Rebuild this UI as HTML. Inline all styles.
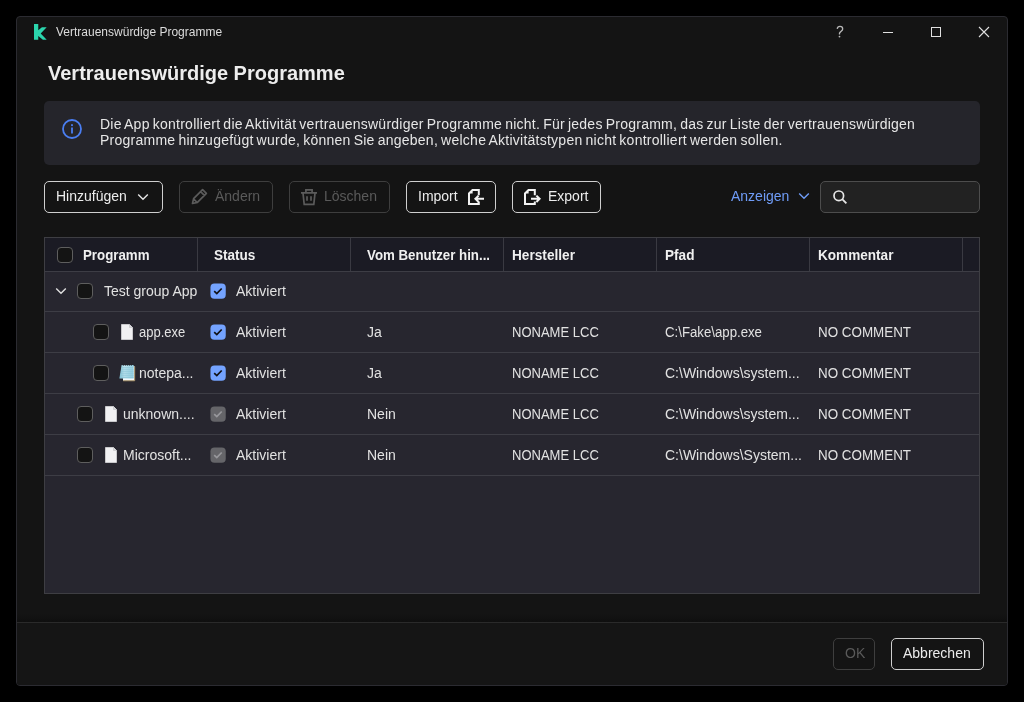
<!DOCTYPE html>
<html><head><meta charset="utf-8"><style>
*{box-sizing:border-box;margin:0;padding:0}
html,body{width:1024px;height:702px;background:#000;overflow:hidden}
body{font-family:"Liberation Sans",sans-serif;color:#e8e8e8}
#root{position:absolute;left:0;top:0;width:1024px;height:702px;will-change:transform}
.a{position:absolute;white-space:nowrap}
.box{position:absolute;border-radius:5px}
.t{position:absolute;white-space:nowrap;font-size:14px;line-height:16px}
.h{position:absolute;white-space:nowrap;font-size:14px;transform-origin:0 0;font-weight:bold;line-height:16px;color:#f0f0f0}
.c{position:absolute;white-space:nowrap;font-size:14px;line-height:16px;color:#e2e2e2}
.cb{position:absolute;width:16px;height:16px;border:1px solid #5e5e5e;border-radius:4px;background:#141414}
.hl{position:absolute;left:45px;width:934px;height:1px;background:#3d3d45}
.vl{position:absolute;top:238px;width:1px;height:33px;background:#3a3a42}
</style></head><body><div id="root">
<div class="a" style="left:16px;top:16px;width:992px;height:670px;background:#141414;border:1px solid #2b2b31;border-radius:4px"></div>
<svg class="a" style="left:34px;top:24px" width="14" height="17" viewBox="0 0 14 17"><path d="M0 0.1H4.26V6.2L7.9 3.35H12.7L6.7 9.5L12.7 15.8H8.9L4.26 11.9V15.8H0Z" fill="#2bd5ad"/></svg>
<div class="a" style="left:56px;top:25px;font-size:12px;line-height:14px;color:#dcdcdc">Vertrauenswürdige Programme</div>
<svg class="a" style="left:834px;top:24px" width="12" height="16" viewBox="0 0 12 16"><path d="M3.2 4.9C3.4 3.2 4.6 2.3 6 2.3C7.6 2.3 8.7 3.4 8.7 4.9C8.7 6.7 6.6 7.3 5.5 9.2V10.4" fill="none" stroke="#b8b8b8" stroke-width="1.3"/><circle cx="5.5" cy="12.6" r="0.9" fill="#b8b8b8"/></svg>
<div class="a" style="left:883px;top:32px;width:10px;height:1px;background:#e0e0e0"></div>
<div class="a" style="left:931px;top:27px;width:10px;height:10px;border:1px solid #e0e0e0"></div>
<svg class="a" style="left:978px;top:26px" width="12" height="12" viewBox="0 0 12 12"><path d="M1 1L11 11M11 1L1 11" stroke="#e0e0e0" stroke-width="1.1"/></svg>
<div class="a" style="left:48px;top:62px;font-size:20px;line-height:22px;font-weight:bold;color:#ededed">Vertrauenswürdige Programme</div>
<div class="a" style="left:44px;top:101px;width:936px;height:64px;background:#25252b;border-radius:5px"></div>
<svg class="a" style="left:62px;top:119px" width="20" height="20" viewBox="0 0 20 20"><circle cx="10" cy="10" r="9" fill="none" stroke="#4a7ef2" stroke-width="1.8"/><rect x="9.1" y="8.5" width="1.8" height="6" fill="#4a7ef2"/><rect x="9.1" y="5.2" width="1.8" height="1.9" fill="#4a7ef2"/></svg>
<div class="t" style="left:100px;top:116px;color:#e6e6e6;letter-spacing:0.25px;word-spacing:-1.1px">Die App kontrolliert die Aktivität vertrauenswürdiger Programme nicht. Für jedes Programm, das zur Liste der vertrauenswürdigen<br>Programme hinzugefügt wurde, können Sie angeben, welche Aktivitätstypen nicht kontrolliert werden sollen.</div>
<div class="box" style="left:44px;top:181px;width:119px;height:32px;border:1px solid #cfcfcf;background:#141414"></div>
<div class="t" style="left:56px;top:188px;color:#ececec;">Hinzufügen</div>
<svg class="a" style="left:137px;top:193px" width="12" height="8" viewBox="0 0 12 8"><path d="M1.2 1.5L6 6.2 10.8 1.5" fill="none" stroke="#e6e6e6" stroke-width="1.4"/></svg>
<div class="box" style="left:179px;top:181px;width:94px;height:32px;border:1px solid #3e3e3e;background:#141414"></div>
<svg class="a" style="left:190px;top:188px" width="18" height="18" viewBox="0 0 18 18"><path d="M12.6 1.6l3.8 3.8-9 9-4.9 1.1 1.1-4.9z M10.6 3.6l3.8 3.8 M4 11.3l2.7 2.7" fill="none" stroke="#5b5b5b" stroke-width="1.7" stroke-linejoin="round"/></svg>
<div class="t" style="left:215px;top:188px;color:#5a5a5a;">Ändern</div>
<div class="box" style="left:289px;top:181px;width:101px;height:32px;border:1px solid #3e3e3e;background:#141414"></div>
<svg class="a" style="left:300px;top:188px" width="18" height="18" viewBox="0 0 18 18"><path d="M1 4.9h16 M5.9 4.7V1.9h6.2v2.8 M3 5.2l1.2 11.2h9.6l1.2-11.2 M7 8.2v4.5 M11 8.2v4.5" fill="none" stroke="#5b5b5b" stroke-width="1.7"/></svg>
<div class="t" style="left:324px;top:188px;color:#5a5a5a;">Löschen</div>
<div class="box" style="left:406px;top:181px;width:90px;height:32px;border:1px solid #cfcfcf;background:#141414"></div>
<div class="t" style="left:418px;top:188px;color:#ececec;">Import</div>
<svg class="a" style="left:466px;top:187px" width="20" height="20" viewBox="0 0 20 20"><path d="M12.8 8.2V2.9H6.5L3 6.4V17h9.8v-2.5" fill="none" stroke="#f2f2f2" stroke-width="2"/><path d="M3 6.6L6.6 2.9V6.6z" fill="#f2f2f2"/><path d="M18 11.8h-8 M12.6 8.6l-3.2 3.2 3.2 3.2" fill="none" stroke="#f2f2f2" stroke-width="2"/></svg>
<div class="box" style="left:512px;top:181px;width:89px;height:32px;border:1px solid #cfcfcf;background:#141414"></div>
<svg class="a" style="left:522px;top:187px" width="20" height="20" viewBox="0 0 20 20"><path d="M12.8 8.2V2.9H6.5L3 6.4V17h9.8v-2.5" fill="none" stroke="#f2f2f2" stroke-width="2"/><path d="M3 6.6L6.6 2.9V6.6z" fill="#f2f2f2"/><path d="M9 11.8h8 M14.4 8.6l3.2 3.2-3.2 3.2" fill="none" stroke="#f2f2f2" stroke-width="2"/></svg>
<div class="t" style="left:548px;top:188px;color:#ececec;">Export</div>
<div class="t" style="left:731px;top:188px;color:#6f9cf7;">Anzeigen</div>
<svg class="a" style="left:798px;top:192px" width="12" height="8" viewBox="0 0 12 8"><path d="M1.2 1.5L6 6.2 10.8 1.5" fill="none" stroke="#6f9cf7" stroke-width="1.4"/></svg>
<div class="box" style="left:820px;top:181px;width:160px;height:32px;background:#222222;border:1px solid #4d4d4d"></div>
<svg class="a" style="left:832px;top:189px" width="16" height="16" viewBox="0 0 16 16"><circle cx="6.8" cy="6.8" r="4.8" fill="none" stroke="#e6e6e6" stroke-width="1.7"/><path d="M10.2 10.2l4.2 4.2" stroke="#e6e6e6" stroke-width="1.8"/></svg>
<div class="a" style="left:44px;top:237px;width:936px;height:357px;background:#27262f;border:1px solid #3e3e43"></div>
<div class="a" style="left:45px;top:238px;width:934px;height:33px;background:#1b1b24"></div>
<div class="hl" style="top:271px"></div>
<div class="hl" style="top:311px"></div>
<div class="hl" style="top:352px"></div>
<div class="hl" style="top:393px"></div>
<div class="hl" style="top:434px"></div>
<div class="hl" style="top:475px"></div>
<div class="vl" style="left:197px"></div>
<div class="vl" style="left:350px"></div>
<div class="vl" style="left:503px"></div>
<div class="vl" style="left:656px"></div>
<div class="vl" style="left:809px"></div>
<div class="vl" style="left:962px"></div>
<div class="cb" style="left:57px;top:247px"></div>
<div class="h" style="left:83px;top:247px;transform:scaleX(0.95)">Programm</div>
<div class="h" style="left:214px;top:247px;transform:scaleX(0.967)">Status</div>
<div class="h" style="left:367px;top:247px;transform:scaleX(0.949)">Vom Benutzer hin...</div>
<div class="h" style="left:512px;top:247px;transform:scaleX(0.975)">Hersteller</div>
<div class="h" style="left:665px;top:247px;transform:scaleX(0.97)">Pfad</div>
<div class="h" style="left:818px;top:247px;transform:scaleX(0.97)">Kommentar</div>
<svg class="a" style="left:55px;top:287px" width="12" height="8" viewBox="0 0 12 8"><path d="M1.2 1.5L6 6.2 10.8 1.5" fill="none" stroke="#e0e0e0" stroke-width="1.4"/></svg>
<div class="cb" style="left:77px;top:283px"></div>
<div class="c" style="left:104px;top:283px">Test group App</div>
<svg class="a" style="left:210px;top:283px" width="16" height="16" viewBox="0 0 16 16"><rect x="0.45" y="0.4" width="15.3" height="15.3" rx="4" fill="#74a3ff"/><path d="M4.2 8.1L6.8 10.5L11.7 5.5" fill="none" stroke="#111114" stroke-width="1.7"/></svg>
<div class="c" style="left:236px;top:283px">Aktiviert</div>
<div class="cb" style="left:93px;top:324px"></div>
<svg class="a" style="left:121px;top:324px" width="12" height="16" viewBox="0 0 12 16"><path d="M0.5 0.5h8l3 3v12h-11z" fill="#f1f1f3" stroke="#c9c9cc" stroke-width="1"/><path d="M8.5 0.5v3h3" fill="#d8d8dc" stroke="#c9c9cc" stroke-width="0.8"/></svg>
<div class="c" style="left:139px;top:324px;transform:scaleX(0.93);transform-origin:0 0">app.exe</div>
<svg class="a" style="left:210px;top:324px" width="16" height="16" viewBox="0 0 16 16"><rect x="0.45" y="0.4" width="15.3" height="15.3" rx="4" fill="#74a3ff"/><path d="M4.2 8.1L6.8 10.5L11.7 5.5" fill="none" stroke="#111114" stroke-width="1.7"/></svg>
<div class="c" style="left:236px;top:324px">Aktiviert</div>
<div class="c" style="left:367px;top:324px">Ja</div>
<div class="c" style="left:512px;top:324px;transform:scaleX(0.93);transform-origin:0 0">NONAME LCC</div>
<div class="c" style="left:665px;top:324px;transform:scaleX(0.944);transform-origin:0 0">C:\Fake\app.exe</div>
<div class="c" style="left:818px;top:324px;transform:scaleX(0.957);transform-origin:0 0">NO COMMENT</div>
<div class="cb" style="left:93px;top:365px"></div>
<svg class="a" style="left:119px;top:364px" width="18" height="18" viewBox="0 0 18 18"><path d="M4 2.2H15.7V16.8H4z" fill="#f4f8fa"/><path d="M15.7 2.6V16.8H4.2" fill="none" stroke="#a48a5a" stroke-width="0.9"/><defs><linearGradient id="ng" x1="0" y1="0" x2="1" y2="0"><stop offset="0" stop-color="#7fc0d3"/><stop offset="0.35" stop-color="#bfe5f0"/><stop offset="1" stop-color="#93d0e2"/></linearGradient></defs><path d="M2.6 1H14.6V14.6H0.4z" fill="url(#ng)"/><path d="M2.5 3.8h12M2.2 5.8h12.4M1.9 7.8h12.7M1.6 9.8h13M1.2 11.8h13.4M0.9 13.6h13.7" stroke="#86c2d4" stroke-width="0.8"/><path d="M4.3 0.2v1.6M6.3 0.2v1.6M8.3 0.2v1.6M10.3 0.2v1.6M12.3 0.2v1.6" stroke="#23222a" stroke-width="0.9"/></svg>
<div class="c" style="left:139px;top:365px">notepa...</div>
<svg class="a" style="left:210px;top:365px" width="16" height="16" viewBox="0 0 16 16"><rect x="0.45" y="0.4" width="15.3" height="15.3" rx="4" fill="#74a3ff"/><path d="M4.2 8.1L6.8 10.5L11.7 5.5" fill="none" stroke="#111114" stroke-width="1.7"/></svg>
<div class="c" style="left:236px;top:365px">Aktiviert</div>
<div class="c" style="left:367px;top:365px">Ja</div>
<div class="c" style="left:512px;top:365px;transform:scaleX(0.93);transform-origin:0 0">NONAME LCC</div>
<div class="c" style="left:665px;top:365px">C:\Windows\system...</div>
<div class="c" style="left:818px;top:365px;transform:scaleX(0.957);transform-origin:0 0">NO COMMENT</div>
<div class="cb" style="left:77px;top:406px"></div>
<svg class="a" style="left:105px;top:406px" width="12" height="16" viewBox="0 0 12 16"><path d="M0.5 0.5h8l3 3v12h-11z" fill="#f1f1f3" stroke="#c9c9cc" stroke-width="1"/><path d="M8.5 0.5v3h3" fill="#d8d8dc" stroke="#c9c9cc" stroke-width="0.8"/></svg>
<div class="c" style="left:123px;top:406px">unknown....</div>
<svg class="a" style="left:210px;top:406px" width="16" height="16" viewBox="0 0 16 16"><rect x="0.45" y="0.4" width="15.3" height="15.3" rx="4" fill="#656569"/><path d="M4.2 8.1L6.8 10.5L11.7 5.5" fill="none" stroke="#98989c" stroke-width="1.7"/></svg>
<div class="c" style="left:236px;top:406px">Aktiviert</div>
<div class="c" style="left:367px;top:406px">Nein</div>
<div class="c" style="left:512px;top:406px;transform:scaleX(0.93);transform-origin:0 0">NONAME LCC</div>
<div class="c" style="left:665px;top:406px">C:\Windows\system...</div>
<div class="c" style="left:818px;top:406px;transform:scaleX(0.957);transform-origin:0 0">NO COMMENT</div>
<div class="cb" style="left:77px;top:447px"></div>
<svg class="a" style="left:105px;top:447px" width="12" height="16" viewBox="0 0 12 16"><path d="M0.5 0.5h8l3 3v12h-11z" fill="#f1f1f3" stroke="#c9c9cc" stroke-width="1"/><path d="M8.5 0.5v3h3" fill="#d8d8dc" stroke="#c9c9cc" stroke-width="0.8"/></svg>
<div class="c" style="left:123px;top:447px">Microsoft...</div>
<svg class="a" style="left:210px;top:447px" width="16" height="16" viewBox="0 0 16 16"><rect x="0.45" y="0.4" width="15.3" height="15.3" rx="4" fill="#656569"/><path d="M4.2 8.1L6.8 10.5L11.7 5.5" fill="none" stroke="#98989c" stroke-width="1.7"/></svg>
<div class="c" style="left:236px;top:447px">Aktiviert</div>
<div class="c" style="left:367px;top:447px">Nein</div>
<div class="c" style="left:512px;top:447px;transform:scaleX(0.93);transform-origin:0 0">NONAME LCC</div>
<div class="c" style="left:665px;top:447px">C:\Windows\System...</div>
<div class="c" style="left:818px;top:447px;transform:scaleX(0.957);transform-origin:0 0">NO COMMENT</div>
<div class="a" style="left:17px;top:614px;width:990px;height:8px;background:linear-gradient(#141414,#0f0f0f)"></div>
<div class="a" style="left:17px;top:622px;width:990px;height:1px;background:#2a2a2a"></div>
<div class="a" style="left:17px;top:623px;width:990px;height:62px;background:#151515;border-radius:0 0 3px 3px"></div>
<div class="box" style="left:833px;top:638px;width:42px;height:32px;border:1px solid #3e3e3e;background:#141414"></div>
<div class="t" style="left:845px;top:645px;color:#5a5a5a;">OK</div>
<div class="box" style="left:891px;top:638px;width:93px;height:32px;border:1px solid #cfcfcf;background:#141414"></div>
<div class="t" style="left:903px;top:645px;color:#ececec;">Abbrechen</div>
</div></body></html>
